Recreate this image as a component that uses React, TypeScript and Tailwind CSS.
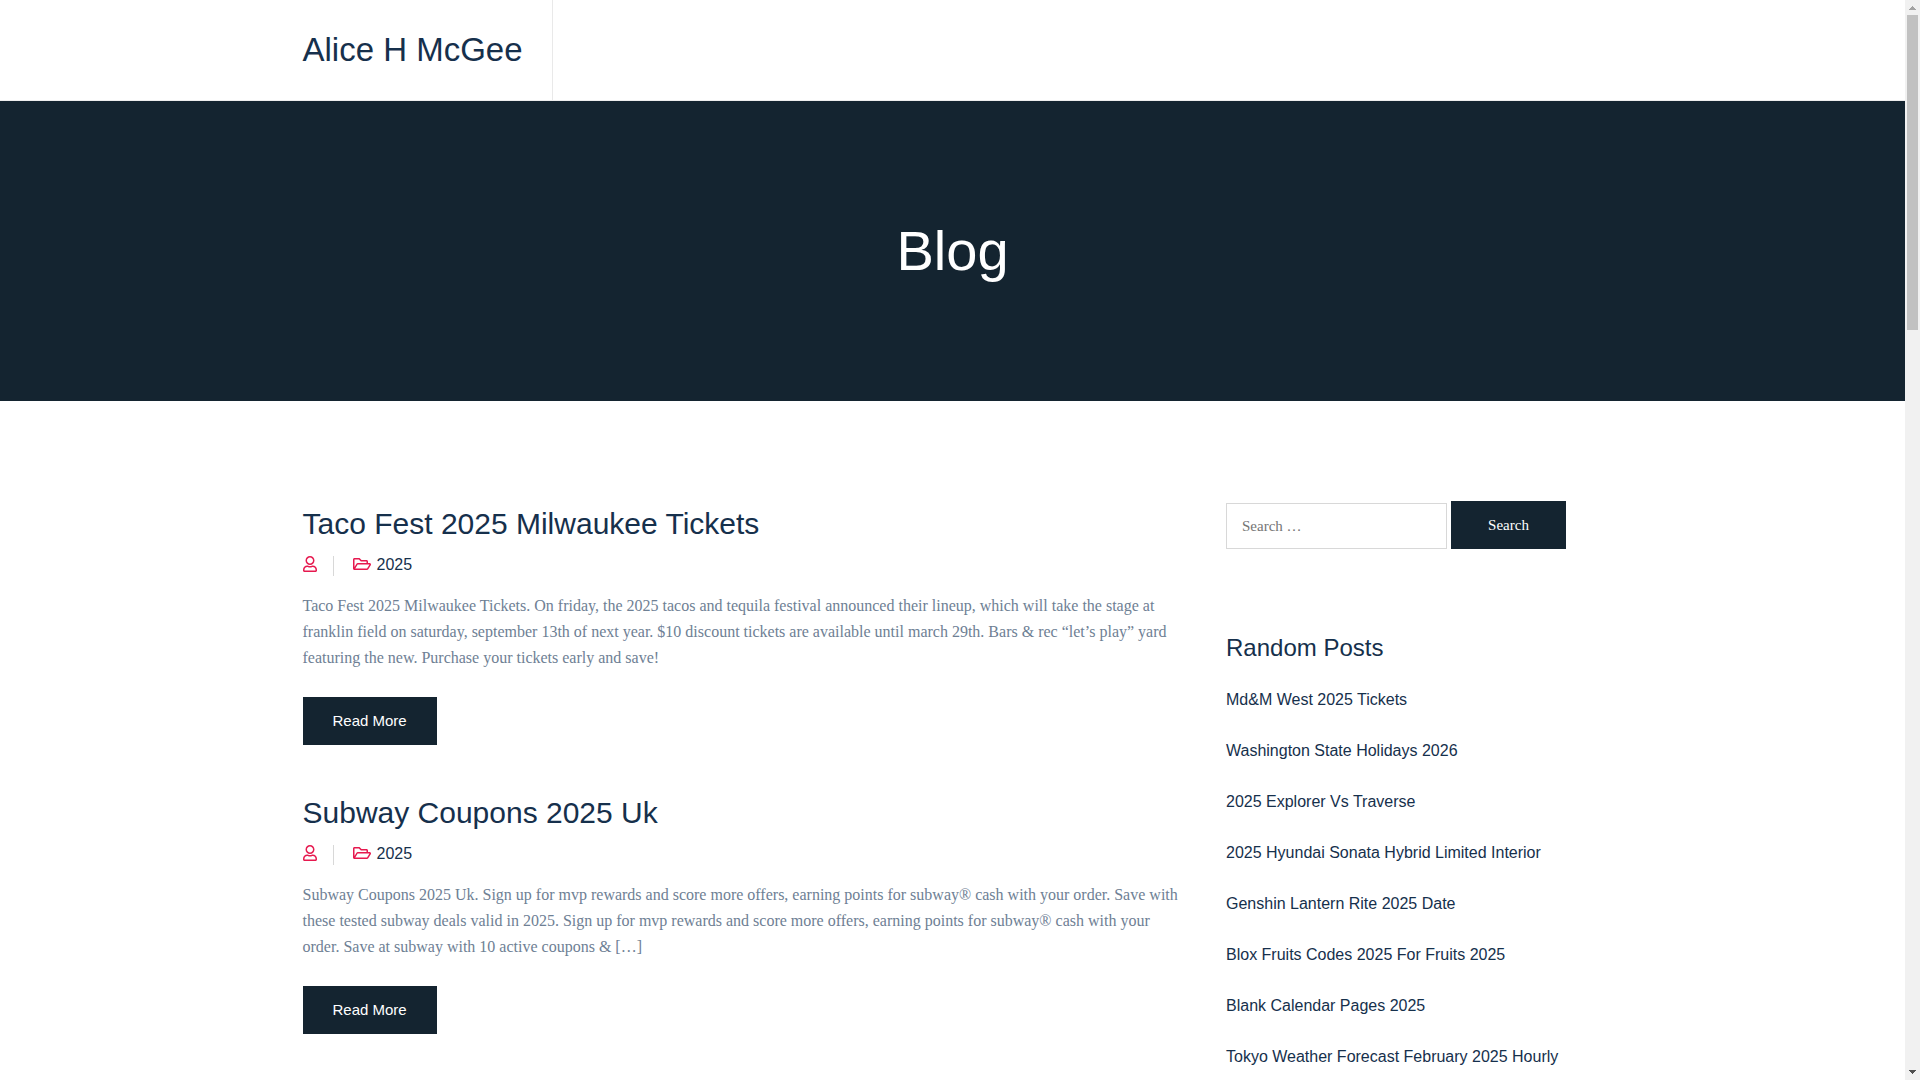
import { useState } from "react";
import { FaRegFolderOpen, FaRegUser } from "react-icons/fa";

type Post = {
  title: string;
  category: string;
  excerpt: string;
};

const posts: Post[] = [
  {
    title: "Taco Fest 2025 Milwaukee Tickets",
    category: "2025",
    excerpt:
      "Taco Fest 2025 Milwaukee Tickets. On friday, the 2025 tacos and tequila festival announced their lineup, which will take the stage at franklin field on saturday, september 13th of next year. $10 discount tickets are available until march 29th. Bars & rec “let’s play” yard featuring the new. Purchase your tickets early and save!",
  },
  {
    title: "Subway Coupons 2025 Uk",
    category: "2025",
    excerpt:
      "Subway Coupons 2025 Uk. Sign up for mvp rewards and score more offers, earning points for subway® cash with your order. Save with these tested subway deals valid in 2025. Sign up for mvp rewards and score more offers, earning points for subway® cash with your order. Save at subway with 10 active coupons & […]",
  },
];

const randomPosts = [
  "Md&M West 2025 Tickets",
  "Washington State Holidays 2026",
  "2025 Explorer Vs Traverse",
  "2025 Hyundai Sonata Hybrid Limited Interior",
  "Genshin Lantern Rite 2025 Date",
  "Blox Fruits Codes 2025 For Fruits 2025",
  "Blank Calendar Pages 2025",
  "Tokyo Weather Forecast February 2025 Hourly",
];

function Header() {
  return (
    <header className="border-b border-[#eeeeee] bg-white">
      <div className="mx-auto flex h-[100px] max-w-[1300px]">
        <div className="flex items-center border-r border-[#e9e9e9] pr-[29px]">
          <a href="#" className="text-[33px] leading-10">Alice H McGee</a>
        </div>
      </div>
    </header>
  );
}

function PostCard({ post }: { post: Post }) {
  return (
    <article>
      <h2 className="text-[30px] leading-[45px]">
        <a href="#">{post.title}</a>
      </h2>
      <div className="mt-[6px] flex h-[26px] items-center text-base">
        <FaRegUser className="mb-[2px] h-4 w-[14px] text-[#e6194f]" />
        <span className="mt-[2px] ml-4 h-5 w-px bg-[#d8d8d8]" />
        <FaRegFolderOpen className="mb-[2px] ml-[19px] h-4 w-[18px] text-[#e6194f]" />
        <a href="#" className="ml-[6px]">{post.category}</a>
      </div>
      <p className="mt-[15px] font-['Liberation_Serif',serif] text-base leading-[26px] text-[#6e8094]">{post.excerpt}</p>
      <a href="#" className="mt-[26px] inline-block bg-[#142430] px-[30px] text-[15px] leading-[48px] text-white">
        Read More
      </a>
    </article>
  );
}

function SearchForm() {
  const [query, setQuery] = useState("");

  return (
    <form className="flex items-end gap-1 font-['Liberation_Serif',serif] text-[15px]" onSubmit={(e) => e.preventDefault()}>
      <input
        type="search"
        aria-label="Search"
        value={query}
        onChange={(e) => setQuery(e.target.value)}
        placeholder="Search …"
        className="h-[46px] w-[221px] border border-[#d8d8d8] px-[15px] placeholder:text-[#757575]"
      />
      <button type="submit" className="h-12 w-[115px] bg-[#142430] text-white">Search</button>
    </form>
  );
}

function Sidebar() {
  return (
    <aside>
      <SearchForm />
      <h3 className="mt-[81px] text-2xl leading-9">Random Posts</h3>
      <ul className="mt-[21px] space-y-[25px] text-base leading-[26px]">
        {randomPosts.map((title) => (
          <li key={title}>
            <a href="#">{title}</a>
          </li>
        ))}
      </ul>
    </aside>
  );
}

function ScrollBar() {
  return (
    <div className="flex w-[15px] shrink-0 flex-col items-center justify-between bg-[#f1f1f1]">
      <div className="flex h-[30.6%] flex-col items-center">
        <svg viewBox="0 0 15 15" className="size-[15px] shrink-0" fill="#a3a3a3" shapeRendering="crispEdges">
          <path d="M7 6h1v1h1v1h1v1h1v1H4V9h1V8h1V7h1z" />
        </svg>
        <div className="w-[11px] grow bg-[#c1c1c1]" />
      </div>
      <svg viewBox="0 0 15 15" className="size-[15px] shrink-0" fill="#505050" shapeRendering="crispEdges">
        <path d="M4 5h7v1h-1v1H9v1H8v1H7V8H6V7H5V6H4z" />
      </svg>
    </div>
  );
}

export default function App() {
  return (
    <div className="flex h-screen overflow-hidden bg-white font-['Liberation_Sans',Arial,sans-serif] text-[#16304c]">
      <div className="min-w-0 grow overflow-hidden">
        <Header />
        <section className="flex h-[300px] items-center justify-center bg-[#142430]">
          <h1 className="text-[56px] leading-[84px] text-white">Blog</h1>
        </section>
        <main className="mx-auto grid max-w-[1300px] grid-cols-[7fr_3fr] gap-[45px] py-[100px]">
          <div className="space-y-[45px]">
            {posts.map((post) => (
              <PostCard key={post.title} post={post} />
            ))}
          </div>
          <Sidebar />
        </main>
      </div>
      <ScrollBar />
    </div>
  );
}
